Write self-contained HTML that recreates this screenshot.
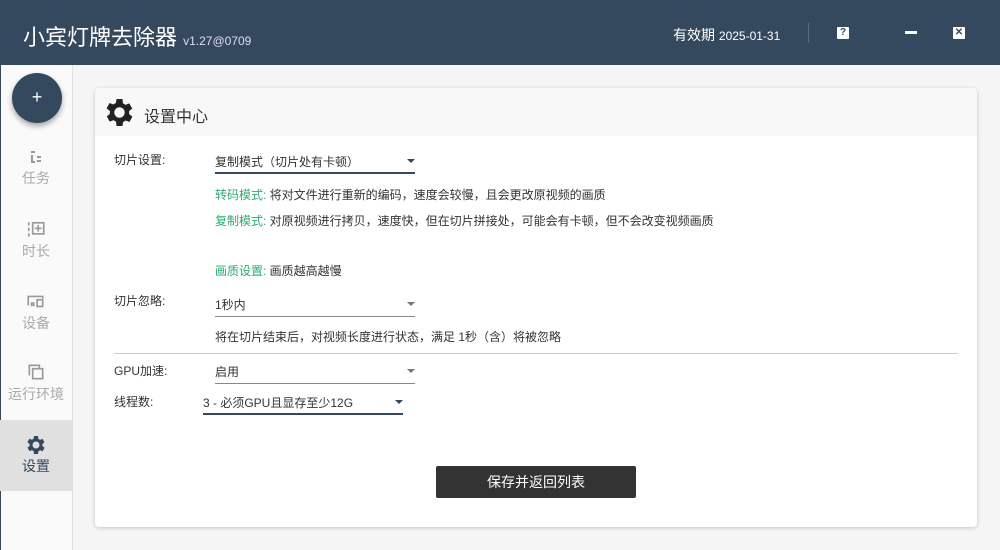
<!DOCTYPE html>
<html><head><meta charset="utf-8"><style>
*{margin:0;padding:0;box-sizing:border-box}
body{width:1000px;height:550px;overflow:hidden;background:#f5f5f5;font-family:"Liberation Sans","Noto Sans CJK SC",sans-serif;position:relative;color:#333}
.hd{position:absolute;left:0;top:0;width:1000px;height:65px;background:#35495e;color:#fff}
.title{position:absolute;left:23px;top:20px;font-size:22px;color:#fff}
.title small{font-size:12px;color:#dde}
.exp{position:absolute;left:673px;top:25px;font-size:14px}
.exp span{font-size:12px}
.vsep{position:absolute;left:808px;top:23px;width:1px;height:20px;background:#5a6b7d}
.ic{position:absolute;background:#fff;color:#35495e;font-size:10px;font-weight:bold;text-align:center;line-height:12px;width:12px;height:12px;border-radius:1px;top:27px}
.side{position:absolute;left:0;top:65px;width:73px;height:485px;background:#fafafa;border-right:1px solid #e0e0e0;border-left:1px solid #35495e}
.fab{position:absolute;left:12px;top:73px;width:50px;height:50px;border-radius:50%;background:#35495e;color:#fff;text-align:center;line-height:48px;font-size:18px;box-shadow:0 3px 6px rgba(0,0,0,.35)}
.nav{position:absolute;left:0;width:72px;text-align:center;color:#aaa;font-size:14px}
.nav svg{display:block;margin:0 auto 2px}
.act{background:#e0e0e0;color:#35495e;top:420px;height:71px;padding-top:16px}
.card{position:absolute;left:95px;top:88px;width:882px;height:439px;background:#fff;border-radius:4px;box-shadow:0 1px 4px rgba(0,0,0,.2)}
.ch{height:48px;background:#f8f8f8;border-radius:4px 4px 0 0;position:relative}
.ch span{position:absolute;left:49px;top:15px;font-size:16px;color:#333}
.t{position:absolute;font-size:12px;color:#333;white-space:nowrap}
.g{color:#2eaa73}
.sel{position:absolute;font-size:12px;color:#333;border-bottom:1px solid #888;height:24px;padding-top:3px}
.sel.dk{border-bottom:2px solid #35495e}
.arr{position:absolute;right:0;top:9px;width:0;height:0;border-left:4px solid transparent;border-right:4px solid transparent;border-top:4px solid #777}
.dk .arr{border-top-color:#35495e}
.btn{position:absolute;left:341px;top:378px;width:200px;height:32px;background:#333;color:#fff;font-size:14px;text-align:center;line-height:32px;border-radius:2px}
</style></head><body>
<div class="hd">
<div class="title">小宾灯牌去除器 <small>v1.27@0709</small></div>
<div class="exp">有效期 <span>2025-01-31</span></div>
<div class="vsep"></div>
<div class="ic" style="left:837px">?</div>
<div style="position:absolute;left:905px;top:31px;width:12px;height:3px;background:#fff"></div>
<div class="ic" style="left:953px">✕</div>
</div>
<div class="side"></div>
<div class="fab">+</div>
<div class="nav" style="top:150px"><svg width="16" height="16" viewBox="0 0 14 16"><g fill="#999"><rect x="2" y="1" width="4" height="2"/><rect x="2" y="5" width="2" height="8"/><rect x="2" y="11" width="4" height="2"/><rect x="8" y="6" width="4" height="2"/><rect x="8" y="10" width="4" height="2"/></g></svg>任务</div>
<div class="nav" style="top:221px"><svg width="20" height="18" viewBox="0 0 18 16"><g fill="none" stroke="#999" stroke-width="1.5"><rect x="6" y="1.5" width="10" height="10"/><path d="M11 3.5v6M8 6.5h6M2.5 1v3M2.5 6v3M2.5 11v3"/></g></svg>时长</div>
<div class="nav" style="top:293px"><svg width="20" height="18" viewBox="0 0 18 16"><g fill="none" stroke="#999" stroke-width="1.5"><path d="M2 11V3h13v2"/><rect x="10" y="6" width="5" height="6"/><rect x="5" y="9" width="2" height="2"/></g></svg>设备</div>
<div class="nav" style="top:362px"><svg width="20" height="20" viewBox="0 0 18 18"><g fill="none" stroke="#999" stroke-width="1.5"><path d="M3 12V3h9v3"/><path d="M6 6h9v9H6z"/></g></svg>运行环境</div>
<div class="nav act"><svg width="18" height="18" viewBox="3 3 18 18"><path fill="#35495e" d="M19.4 13a7.5 7.5 0 000-2l2.1-1.6-2-3.5-2.5 1a7 7 0 00-1.7-1L15 3h-4l-.4 2.7a7 7 0 00-1.7 1l-2.5-1-2 3.5L6.6 11a7.5 7.5 0 000 2l-2.1 1.6 2 3.5 2.5-1a7 7 0 001.7 1L11 21h4l.4-2.7a7 7 0 001.7-1l2.5 1 2-3.5zM13 15.5a3.5 3.5 0 110-7 3.5 3.5 0 010 7z" transform="translate(-1 0)"/></svg>设置</div>
<div class="card">
<div class="ch"><svg style="position:absolute;left:11px;top:11px" width="27" height="27" viewBox="3 3 18 18"><path fill="#222" d="M19.4 13a7.5 7.5 0 000-2l2.1-1.6-2-3.5-2.5 1a7 7 0 00-1.7-1L15 3h-4l-.4 2.7a7 7 0 00-1.7 1l-2.5-1-2 3.5L6.6 11a7.5 7.5 0 000 2l-2.1 1.6 2 3.5 2.5-1a7 7 0 001.7 1L11 21h4l.4-2.7a7 7 0 001.7-1l2.5 1 2-3.5zM13 15.5a3.5 3.5 0 110-7 3.5 3.5 0 010 7z" transform="translate(-1 0)"/></svg><span>设置中心</span></div>
<div class="t" style="left:19px;top:63px">切片设置:</div>
<div class="sel dk" style="left:120px;top:62px;width:200px">复制模式（切片处有卡顿）<i class="arr"></i></div>
<div class="t" style="left:120px;top:98px"><span class="g">转码模式:</span> 将对文件进行重新的编码，速度会较慢，且会更改原视频的画质</div>
<div class="t" style="left:120px;top:124px"><span class="g">复制模式:</span> 对原视频进行拷贝，速度快，但在切片拼接处，可能会有卡顿，但不会改变视频画质</div>
<div class="t" style="left:120px;top:174px"><span class="g">画质设置:</span> 画质越高越慢</div>
<div class="t" style="left:19px;top:204px">切片忽略:</div>
<div class="sel" style="left:120px;top:205px;width:200px">1秒内<i class="arr"></i></div>
<div class="t" style="left:120px;top:240px">将在切片结束后，对视频长度进行状态，满足 1秒（含）将被忽略</div>
<div style="position:absolute;left:19px;top:265px;width:844px;height:1px;background:#ccc"></div>
<div class="t" style="left:19px;top:274px">GPU加速:</div>
<div class="sel" style="left:120px;top:272px;width:200px">启用<i class="arr"></i></div>
<div class="t" style="left:19px;top:305px">线程数:</div>
<div class="sel dk" style="left:108px;top:303px;width:200px;padding-left:0">3 - 必须GPU且显存至少12G<i class="arr" style="right:0"></i></div>
<div class="btn">保存并返回列表</div>
</div>
</body></html>
